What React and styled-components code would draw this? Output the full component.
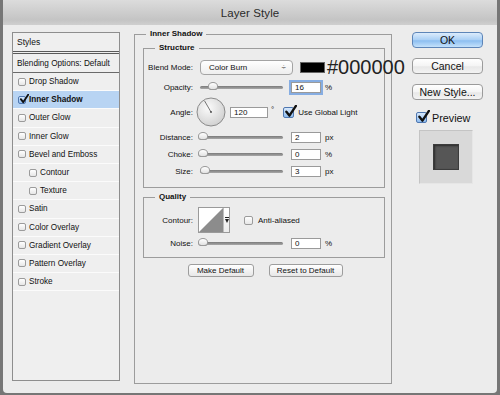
import React from "react"
import styled, { createGlobalStyle } from "styled-components"

const GlobalStyle = createGlobalStyle`
  html, body {
    margin: 0;
    padding: 0;
    background: #777777;
  }
  body {
    font-family: "Liberation Sans", Arial, sans-serif;
    color: #111111;
  }
`

const styleItems = [
  { label: "Drop Shadow" },
  { label: "Inner Shadow", checked: true, selected: true },
  { label: "Outer Glow" },
  { label: "Inner Glow" },
  { label: "Bevel and Emboss" },
  { label: "Contour", indent: true },
  { label: "Texture", indent: true },
  { label: "Satin" },
  { label: "Color Overlay" },
  { label: "Gradient Overlay" },
  { label: "Pattern Overlay" },
  { label: "Stroke" },
]

function Check({ checked, size = 9 }) {
  return (
    <CheckBox $checked={checked} $size={size}>
      {checked && (
        <CheckMark viewBox="0 0 12 12" width={size + 2} height={size + 2}>
          <path
            d="M2.2 6.2 L5 9.8 L11 0.8"
            fill="none"
            stroke="#111"
            strokeWidth="2.2"
            strokeLinecap="round"
            strokeLinejoin="round"
          />
        </CheckMark>
      )}
    </CheckBox>
  )
}

function Slider({ pos }) {
  return (
    <Track>
      <Thumb style={{ left: pos }} />
    </Track>
  )
}

function Dial() {
  return (
    <svg width="30" height="30" viewBox="0 0 30 30">
      <defs>
        <radialGradient id="dialFill" cx="40%" cy="35%" r="70%">
          <stop offset="0%" stopColor="#fbfbfb" />
          <stop offset="100%" stopColor="#cfcfcf" />
        </radialGradient>
      </defs>
      <circle cx="15" cy="15" r="14" fill="url(#dialFill)" stroke="#8a8a8a" />
      <line x1="15" y1="15" x2="8.5" y2="3.8" stroke="#666" strokeWidth="0.9" />
      <circle cx="15" cy="15" r="0.9" fill="#444" />
    </svg>
  )
}

function ContourPicker() {
  return (
    <ContourBox>
      <svg width="24" height="24" viewBox="0 0 24 24">
        <rect width="24" height="24" fill="#fff" />
        <polygon points="0,24 24,0 24,24" fill="#8c8c8c" />
      </svg>
      <ContourArrow>
        <svg width="4" height="6" viewBox="0 0 4 6">
          <rect x="0" y="0" width="4" height="1" fill="#222" />
          <polygon points="0,2 4,2 2,6" fill="#222" />
        </svg>
      </ContourArrow>
    </ContourBox>
  )
}

export default function App() {
  return (
    <Frame>
      <GlobalStyle />
      <Dialog>
        <TitleBar>Layer Style</TitleBar>
        <Content>
          <StylesPanel>
            <PanelHeader>Styles</PanelHeader>
            <BlendingRow>Blending Options: Default</BlendingRow>
            {styleItems.map((item) => (
              <StyleRow
                key={item.label}
                $selected={item.selected}
                $indent={item.indent}
              >
                <Check checked={item.checked} size={8} />
                <StyleLabel $bold={item.selected}>{item.label}</StyleLabel>
              </StyleRow>
            ))}
          </StylesPanel>

          <MainGroup>
            <Legend>Inner Shadow</Legend>
            <GroupBody>
              <Group>
                <Legend>Structure</Legend>
                <Rows $top={7} $bottom={10}>
                  <Row $h={15}>
                    <Label>Blend Mode:</Label>
                    <Select>
                      <span>Color Burn</span>
                      <SelectArrows>÷</SelectArrows>
                    </Select>
                    <Swatch />
                    <HexText>#000000</HexText>
                  </Row>
                  <Row $h={12} $mt={6}>
                    <Label>Opacity:</Label>
                    <Slider pos={8} />
                    <Field $focus>16</Field>
                    <Unit>%</Unit>
                  </Row>
                  <Row $h={30} $mt={4}>
                    <Label>Angle:</Label>
                    <DialWrap>
                      <Dial />
                    </DialWrap>
                    <Field $w={38} $ml={4}>120</Field>
                    <Degree>°</Degree>
                    <CheckWrap $ml={9}>
                      <Check checked size={11} />
                    </CheckWrap>
                    <CheckText $ml={4}>Use Global Light</CheckText>
                  </Row>
                  <Row $h={12} $mt={4}>
                    <Label>Distance:</Label>
                    <Slider pos={-2} />
                    <Field>2</Field>
                    <Unit>px</Unit>
                  </Row>
                  <Row $h={12} $mt={5}>
                    <Label>Choke:</Label>
                    <Slider pos={-2} />
                    <Field>0</Field>
                    <Unit>%</Unit>
                  </Row>
                  <Row $h={12} $mt={5}>
                    <Label>Size:</Label>
                    <Slider pos={0} />
                    <Field>3</Field>
                    <Unit>px</Unit>
                  </Row>
                </Rows>
              </Group>

              <Group $mt={4}>
                <Legend>Quality</Legend>
                <Rows $top={5} $bottom={8}>
                  <Row $h={26}>
                    <Label>Contour:</Label>
                    <ContourPicker />
                    <CheckWrap $ml={14}>
                      <Check size={9} />
                    </CheckWrap>
                    <CheckText $ml={5}>Anti-aliased</CheckText>
                  </Row>
                  <Row $h={12} $mt={4}>
                    <Label>Noise:</Label>
                    <Slider pos={-2} />
                    <Field>0</Field>
                    <Unit>%</Unit>
                  </Row>
                </Rows>
              </Group>

              <ButtonRow>
                <SmallButton $w={66}>Make Default</SmallButton>
                <SmallButton $w={74}>Reset to Default</SmallButton>
              </ButtonRow>
            </GroupBody>
          </MainGroup>

          <SideColumn>
            <BigButton $primary>OK</BigButton>
            <BigButton>Cancel</BigButton>
            <BigButton>New Style...</BigButton>
            <PreviewToggle>
              <Check checked size={11} />
              <PreviewText>Preview</PreviewText>
            </PreviewToggle>
            <PreviewBox>
              <PreviewSquare />
            </PreviewBox>
          </SideColumn>
        </Content>
      </Dialog>
    </Frame>
  )
}

const Frame = styled.div`
  width: 500px;
  height: 395px;
  box-sizing: border-box;
  padding: 0 3px 2px 3px;
  background: #767676;
`

const Dialog = styled.div`
  height: 100%;
  display: flex;
  flex-direction: column;
  background: #ececec;
  border-radius: 0 0 4px 4px;
  overflow: hidden;
`

const TitleBar = styled.div`
  height: 25px;
  flex: none;
  display: flex;
  align-items: center;
  justify-content: center;
  background: linear-gradient(#dcdcdc, #c4c4c4 80%, #cfcfcf);
  font-size: 11.5px;
  color: #2a2a2a;
  letter-spacing: 0.1px;
`

const Content = styled.div`
  flex: 1;
  display: flex;
  align-items: flex-start;
  padding: 7px 14px 0 9px;
`

const StylesPanel = styled.div`
  width: 108px;
  height: 349px;
  flex: none;
  box-sizing: border-box;
  border: 1px solid #8e8e8e;
  background: #efefef;
  font-size: 8.2px;
`

const PanelHeader = styled.div`
  height: 18px;
  display: flex;
  align-items: center;
  padding-left: 4px;
  border-bottom: 3px double #5a5a5a;
  font-size: 8.5px;
`

const BlendingRow = styled.div`
  height: 18px;
  display: flex;
  align-items: center;
  padding-left: 4px;
  border-bottom: 1px solid #6a6a6a;
`

const StyleRow = styled.div`
  height: 18.2px;
  box-sizing: border-box;
  display: flex;
  align-items: center;
  padding-left: ${(p) => (p.$indent ? 16 : 5)}px;
  border-bottom: 1px solid #fbfbfb;
  background: ${(p) => (p.$selected ? "#b8d4f3" : "transparent")};
`

const StyleLabel = styled.span`
  margin-left: 3px;
  font-weight: ${(p) => (p.$bold ? "bold" : "normal")};
  white-space: nowrap;
`

const CheckBox = styled.span`
  position: relative;
  flex: none;
  width: ${(p) => p.$size}px;
  height: ${(p) => p.$size}px;
  box-sizing: border-box;
  border: 1px solid ${(p) => (p.$checked ? "#4f77b0" : "#9b9b9b")};
  border-radius: 2px;
  background: ${(p) =>
    p.$checked
      ? "linear-gradient(#d7e8fb, #8fbdf0)"
      : "linear-gradient(#ffffff, #e6e6e6)"};
`

const CheckMark = styled.svg`
  position: absolute;
  left: 0;
  top: -3px;
`

const Group = styled.fieldset`
  margin: ${(p) => p.$mt || 0}px 0 0 0;
  padding: 0;
  border: 1px solid #9c9c9c;
  min-width: 0;
  box-sizing: border-box;
`

const MainGroup = styled(Group)`
  flex: none;
  width: 258px;
  height: 355px;
  margin: -3px 0 0 14px;
`

const Legend = styled.legend`
  margin-left: 11px;
  padding: 0 4px;
  font-size: 8px;
  line-height: 10px;
  font-weight: bold;
`

const GroupBody = styled.div`
  padding: 4px 6px 0 8px;
`

const Rows = styled.div`
  display: flex;
  flex-direction: column;
  padding: ${(p) => p.$top}px 0 ${(p) => p.$bottom}px 0;
`

const Row = styled.div`
  height: ${(p) => p.$h}px;
  margin-top: ${(p) => p.$mt || 0}px;
  display: flex;
  align-items: center;
  font-size: 8px;

  & > * {
    flex: none;
  }
`

const Label = styled.div`
  width: 49px;
  text-align: right;
  white-space: nowrap;
`

const Select = styled.div`
  width: 93px;
  height: 15px;
  margin-left: 7px;
  box-sizing: border-box;
  display: flex;
  align-items: center;
  justify-content: space-between;
  padding: 0 6px 0 8px;
  border: 1px solid #a4a4a4;
  border-radius: 4px;
  background: linear-gradient(#ffffff, #eeeeee);
  font-size: 8px;
`

const SelectArrows = styled.span`
  font-size: 8px;
  color: #333;
`

const Swatch = styled.div`
  width: 25px;
  height: 11px;
  margin-left: 7px;
  background: #000;
  border: 1px solid #666;
  box-sizing: border-box;
`

const HexText = styled.span`
  margin-left: 2px;
  font-size: 20px;
  line-height: 15px;
  color: #222;
  white-space: nowrap;
`

const Track = styled.div`
  position: relative;
  width: 83px;
  height: 3px;
  margin-left: 7px;
  border-radius: 2px;
  background: linear-gradient(#7a7a7a, #a8a8a8);
`

const Thumb = styled.div`
  position: absolute;
  top: -4px;
  width: 10px;
  height: 8px;
  box-sizing: border-box;
  border: 1px solid #9a9a9a;
  border-radius: 50% 50% 35% 35%;
  background: linear-gradient(#ffffff, #e2e2e2);
`

const Field = styled.div`
  width: ${(p) => p.$w || 30}px;
  height: 11px;
  margin-left: ${(p) => (p.$ml !== undefined ? p.$ml : 8)}px;
  box-sizing: border-box;
  padding-left: 3px;
  display: flex;
  align-items: center;
  border: 1px solid #9a9a9a;
  background: #fff;
  font-size: 8px;
  ${(p) => (p.$focus ? "box-shadow: 0 0 0 2px #86ade2;" : "")}
`

const Unit = styled.span`
  margin-left: 4px;
  font-size: 8px;
`

const DialWrap = styled.div`
  width: 30px;
  height: 30px;
  margin-left: 3px;
`

const Degree = styled.span`
  align-self: flex-start;
  margin: 8px 0 0 3px;
  font-size: 8px;
`

const CheckWrap = styled.div`
  display: flex;
  margin-left: ${(p) => p.$ml}px;
`

const CheckText = styled.span`
  margin-left: ${(p) => p.$ml}px;
  font-size: 8px;
  white-space: nowrap;
`

const ContourBox = styled.div`
  width: 32px;
  height: 26px;
  margin-left: 5px;
  box-sizing: border-box;
  display: flex;
  border: 1px solid #9a9a9a;
  background: #fff;
`

const ContourArrow = styled.div`
  flex: 1;
  display: flex;
  align-items: center;
  justify-content: center;
  border-left: 1px solid #bdbdbd;
  background: linear-gradient(#ffffff, #ececec);
`

const ButtonRow = styled.div`
  display: flex;
  justify-content: center;
  gap: 15px;
  margin-top: 6px;
  padding-left: 2px;
`

const SmallButton = styled.div`
  width: ${(p) => p.$w}px;
  height: 13px;
  box-sizing: border-box;
  display: flex;
  align-items: center;
  justify-content: center;
  border: 1px solid #9d9d9d;
  border-radius: 3px;
  background: linear-gradient(#ffffff, #e7e7e7);
  font-size: 8px;
  white-space: nowrap;
`

const SideColumn = styled.div`
  width: 71px;
  margin-left: 20px;
  display: flex;
  flex-direction: column;
  gap: 10px;
`

const BigButton = styled.div`
  height: 16px;
  box-sizing: border-box;
  display: flex;
  align-items: center;
  justify-content: center;
  border: 1px solid ${(p) => (p.$primary ? "#5d85b8" : "#9b9b9b")};
  border-radius: 4px;
  background: ${(p) =>
    p.$primary
      ? "linear-gradient(#dcecfc, #a9cff5 50%, #8cbef0 55%, #c4e1fb)"
      : "linear-gradient(#ffffff, #f4f4f4 50%, #e8e8e8 55%, #f3f3f3)"};
  font-size: 10.5px;
  white-space: nowrap;
`

const PreviewToggle = styled.div`
  display: flex;
  align-items: center;
  margin: 2px 0 0 4px;
  height: 11px;
`

const PreviewText = styled.span`
  margin-left: 5px;
  font-size: 10.8px;
`

const PreviewBox = styled.div`
  width: 54px;
  height: 54px;
  margin: -3px 0 0 7px;
  box-sizing: border-box;
  display: flex;
  align-items: center;
  justify-content: center;
  border: 1px solid;
  border-color: #c4c4c4 #e6e6e6 #e6e6e6 #c4c4c4;
  background: #d9d9d9;
`

const PreviewSquare = styled.div`
  width: 26px;
  height: 26px;
  box-sizing: border-box;
  background: #565656;
  border: 1px solid #3c3c3c;
  box-shadow: inset 1px 1px 2px rgba(0, 0, 0, 0.5);
`
